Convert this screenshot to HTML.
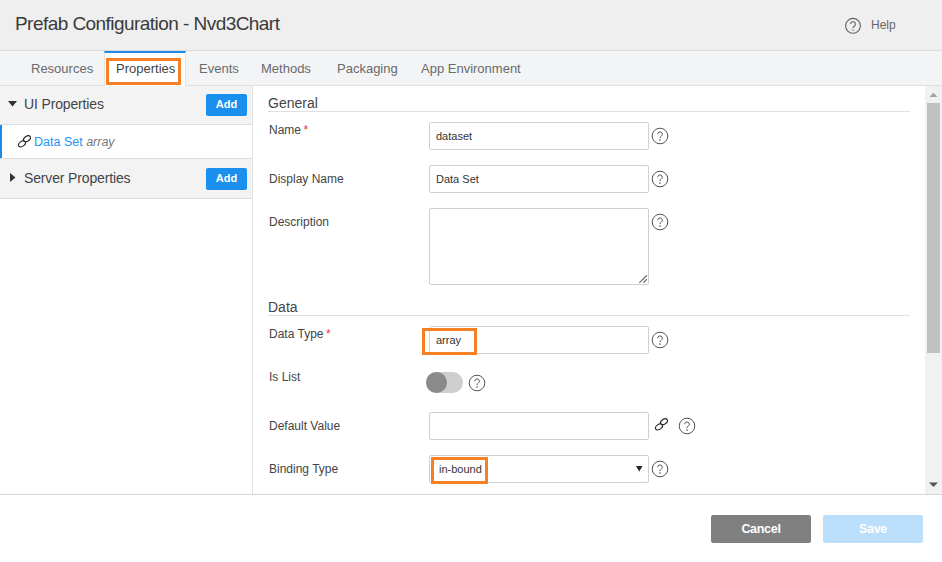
<!DOCTYPE html>
<html><head><meta charset="utf-8">
<style>
*{box-sizing:border-box;margin:0;padding:0}
html,body{width:942px;height:562px;overflow:hidden;background:#fff;font-family:"Liberation Sans",sans-serif;color:#333}
.a{position:absolute}
#hdr{left:0;top:0;width:942px;height:51px;background:#efefef;border-bottom:1px solid #dcdcdc}
#title{left:15px;top:13px;font-size:19px;letter-spacing:-0.55px;color:#3a3a3a;white-space:nowrap}
#help{left:871px;top:18px;font-size:12px;color:#666}
#tabs{left:0;top:51px;width:942px;height:35px;background:#f3f4f6;border-bottom:1px solid #dedede}
.tab{top:61px;font-size:13px;color:#6a6a6a;white-space:nowrap}
#acttab{left:104px;top:51px;width:82px;height:35px;background:#fff;border-top:2px solid #1e88e5;border-left:1px solid #e2e2e2;border-right:1px solid #e2e2e2}
.ob{border:3px solid #f57f22}
#left{left:0;top:86px;width:253px;height:408px;background:#fff;border-right:1px solid #e2e2e2}
.sec{left:0;width:252px;background:#f3f3f3;border-bottom:1px solid #dedede}
.sectxt{font-size:14px;letter-spacing:-0.15px;color:#444;white-space:nowrap}
.addbtn{width:41px;height:22px;background:#1b8fed;color:#fff;font-size:11px;font-weight:bold;border-radius:2px;text-align:center;line-height:21px}
.lbl{left:269px;font-size:12px;color:#444;white-space:nowrap}
.req{color:#e53935}
.inp{left:429px;width:220px;height:28px;border:1px solid #d0d0d0;border-radius:2px;background:#fff;font-size:11px;color:#333;padding-left:6px;line-height:26px}
.sechd{left:268px;width:642px;font-size:14px;color:#444;border-bottom:1px solid #e0e0e0}
#foot{left:0;top:494px;width:942px;height:68px;background:#fff;border-top:1px solid #d6d6d6}
.btn{top:515px;width:100px;height:28px;border-radius:2px;color:#fff;font-size:12.5px;letter-spacing:-0.3px;font-weight:bold;text-align:center;line-height:28px}
</style></head><body>
<div id="hdr" class="a"></div>
<div id="title" class="a">Prefab Configuration - Nvd3Chart</div>
<svg class="a" style="left:844px;top:17px" width="18" height="18" viewBox="0 0 18 18"><circle cx="9" cy="8.8" r="7.4" fill="none" stroke="#666" stroke-width="1.1"/><path d="M6.6 7.1 a2.4 2.4 0 1 1 3.6 2.1 c-0.8 0.5 -1.2 0.9 -1.2 1.9" fill="none" stroke="#666" stroke-width="1.1"/><circle cx="9" cy="13" r="0.7" fill="#666"/></svg>
<div id="help" class="a">Help</div>

<div id="tabs" class="a"></div>
<div id="acttab" class="a"></div>
<div class="a tab" style="left:31px">Resources</div>
<div class="a tab" style="left:116px;color:#444">Properties</div>
<div class="a tab" style="left:199px">Events</div>
<div class="a tab" style="left:261px">Methods</div>
<div class="a tab" style="left:337px">Packaging</div>
<div class="a tab" style="left:421px">App Environment</div>
<div class="a ob" style="left:106px;top:58px;width:75px;height:27px"></div>

<div id="left" class="a"></div>
<div class="a sec" style="top:86px;height:39px"></div>
<svg class="a" style="left:8px;top:101px" width="10" height="6"><path d="M0 0 L9 0 L4.5 5.5 Z" fill="#333"/></svg>
<div class="a sectxt" style="left:24px;top:96px">UI Properties</div>
<div class="a addbtn" style="left:206px;top:94px">Add</div>
<div class="a" style="left:0;top:125px;width:2px;height:34px;background:#1e88e5"></div>
<div class="a" style="left:0;top:158px;width:252px;height:1px;background:#dedede"></div>
<svg class="a" style="left:17px;top:135px" width="14" height="13" viewBox="0 0 14 13"><g fill="none" stroke="#222" stroke-width="1.1"><ellipse cx="5" cy="8.85" rx="3.9" ry="2.45" transform="rotate(-35 5 8.85)"/><ellipse cx="9.95" cy="3.8" rx="3.9" ry="2.45" transform="rotate(-35 9.95 3.8)"/></g></svg>
<div class="a" style="left:34px;top:135px;font-size:12.5px;color:#2196f3;white-space:nowrap">Data Set <i style="color:#777">array</i></div>
<div class="a sec" style="top:159px;height:40px"></div>
<svg class="a" style="left:10px;top:173px" width="6" height="10"><path d="M0 0 L5.5 4.5 L0 9 Z" fill="#333"/></svg>
<div class="a sectxt" style="left:24px;top:170px">Server Properties</div>
<div class="a addbtn" style="left:206px;top:168px">Add</div>

<!-- form -->
<div class="a sechd" style="top:95px;height:17px">General</div>
<div class="a lbl" style="top:123px">Name<span class="req" style="margin-left:2.5px">*</span></div>
<div class="a inp" style="top:122px">dataset</div>
<div class="a lbl" style="top:172px">Display Name</div>
<div class="a inp" style="top:165px">Data Set</div>
<div class="a lbl" style="top:215px">Description</div>
<div class="a inp" style="top:208px;height:77px"></div>
<svg class="a" style="left:637px;top:273px" width="10" height="10"><path d="M9.9 2.2 L2.3 9.8 M9.9 6.2 L6.3 9.8" stroke="#666" stroke-width="1.1"/></svg>

<div class="a sechd" style="top:299px;height:17px">Data</div>
<div class="a lbl" style="top:327px">Data Type<span class="req" style="margin-left:2.5px">*</span></div>
<div class="a inp" style="top:326px">array</div>
<div class="a ob" style="left:422px;top:328px;width:55px;height:27px"></div>
<div class="a lbl" style="top:370px">Is List</div>
<div class="a" style="left:426px;top:372px;width:37px;height:21px;border-radius:11px;background:#cfcfcf"></div>
<div class="a" style="left:426px;top:372px;width:21px;height:21px;border-radius:50%;background:#8a8a8a"></div>
<div class="a lbl" style="top:419px">Default Value</div>
<div class="a inp" style="top:412px"></div>
<div class="a lbl" style="top:462px">Binding Type</div>
<div class="a inp" style="top:455px;padding-left:9px">in-bound</div>
<svg class="a" style="left:636px;top:466px" width="7" height="6"><path d="M0 0 L6.5 0 L3.25 5.5 Z" fill="#222"/></svg>
<div class="a ob" style="left:431px;top:457px;width:57px;height:27px"></div>

<!-- help icons -->
<svg width="0" height="0" style="position:absolute"><defs><g id="q"><circle cx="9" cy="9" r="7.8" fill="none" stroke="#555" stroke-width="1"/><path d="M6.7 7.2 a2.3 2.3 0 1 1 3.5 2 c-0.8 0.5 -1.2 0.9 -1.2 1.9" fill="none" stroke="#555" stroke-width="1"/><circle cx="9" cy="13.1" r="0.8" fill="#555"/></g></defs></svg>
<svg class="a" style="left:651px;top:127px" width="18" height="18"><use href="#q"/></svg>
<svg class="a" style="left:651px;top:170px" width="18" height="18"><use href="#q"/></svg>
<svg class="a" style="left:651px;top:213px" width="18" height="18"><use href="#q"/></svg>
<svg class="a" style="left:651px;top:331px" width="18" height="18"><use href="#q"/></svg>
<svg class="a" style="left:468px;top:374px" width="18" height="18"><use href="#q"/></svg>
<svg class="a" style="left:678px;top:417px" width="18" height="18"><use href="#q"/></svg>
<svg class="a" style="left:651px;top:460px" width="18" height="18"><use href="#q"/></svg>
<svg class="a" style="left:654px;top:418px" width="14" height="13" viewBox="0 0 14 13"><g fill="none" stroke="#222" stroke-width="1.1"><ellipse cx="5" cy="8.85" rx="3.9" ry="2.45" transform="rotate(-35 5 8.85)"/><ellipse cx="9.95" cy="3.8" rx="3.9" ry="2.45" transform="rotate(-35 9.95 3.8)"/></g></svg>

<!-- scrollbar -->
<div class="a" style="left:925px;top:86px;width:17px;height:408px;background:#f1f1f1"></div>
<div class="a" style="left:927px;top:103px;width:13px;height:250px;background:#c1c1c1"></div>
<svg class="a" style="left:929px;top:92px" width="9" height="6"><path d="M0.5 5 L4.5 0.8 L8.5 5 Z" fill="#a3a3a3"/></svg>
<svg class="a" style="left:929px;top:482px" width="9" height="6"><path d="M0 0.5 L9 0.5 L4.5 5 Z" fill="#555"/></svg>

<div id="foot" class="a"></div>
<div class="a btn" style="left:711px;background:#808080">Cancel</div>
<div class="a btn" style="left:823px;background:#bbdefb">Save</div>
</body></html>
